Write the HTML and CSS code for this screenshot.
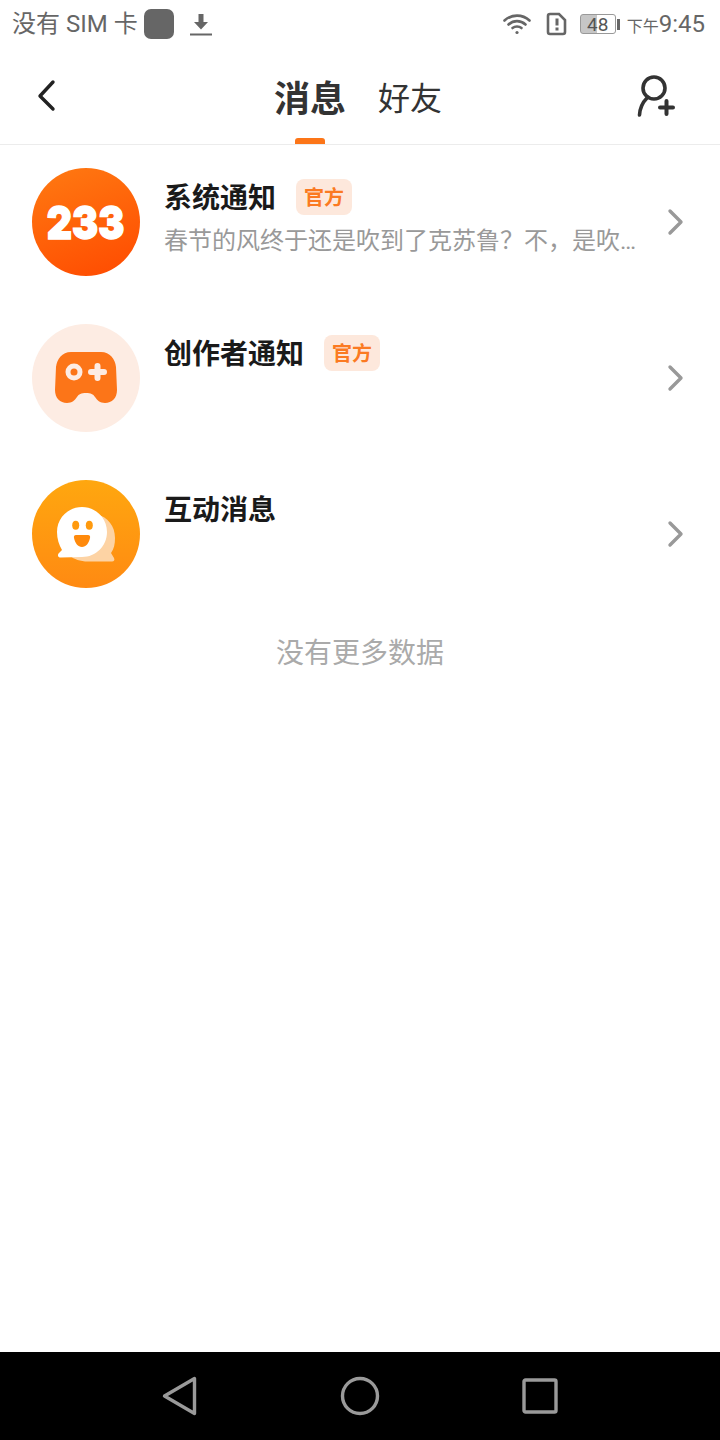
FILE: index.html
```html
<!DOCTYPE html>
<html lang="zh">
<head>
<meta charset="utf-8">
<title>消息</title>
<link rel="stylesheet" href="styles.css">
</head>
<body>
<div class="app">
  <div class="status">
    <div class="status-left">
      <span class="carrier">没有 SIM 卡</span>
      <span class="square"></span>
      <svg class="dl" width="24" height="26" viewBox="0 0 24 26"><path d="M9.500 3h5v8h4.500l-7 7.500-7-7.500h4.500z" fill="#666"/><rect x="1" y="22.500" width="22" height="2" fill="#666"/></svg>
    </div>
    <div class="status-right">
      <svg class="wifi" width="28" height="22" viewBox="0 0 28 22" fill="none" stroke="#666" stroke-width="2.600" stroke-linecap="round"><path d="M1.500 7.500C8.500 1 19.500 1 26.500 7.500"/><path d="M5.500 11.500C10.500 7 17.500 7 22.500 11.500"/><path d="M9.500 15C12 13 16 13 18.500 15"/><circle cx="14" cy="19.500" r="1.600" fill="#666" stroke="none"/></svg>
      <svg class="sim" width="22" height="24" viewBox="0 0 22 24"><path d="M4 2h9l6 6v12a2 2 0 0 1-2 2H4a2 2 0 0 1-2-2V4a2 2 0 0 1 2-2z" fill="none" stroke="#666" stroke-width="2.600"/><rect x="9.500" y="6.500" width="3" height="7" fill="#666"/><rect x="9.500" y="15.500" width="3" height="3" fill="#666"/></svg>
      <div class="battery"><div class="battery-body"><span class="battery-num">48</span></div><span class="battery-tip"></span></div>
      <div class="clock"><span class="clock-ap">下午</span>9:45</div>
    </div>
  </div>

  <header class="header">
    <svg class="back" width="24" height="36" viewBox="0 0 24 36" fill="none" stroke="#222" stroke-width="3.400" stroke-linecap="round" stroke-linejoin="round"><path d="M17 4L4 18l13 13"/></svg>
    <nav class="tabs">
      <div class="tab tab-active">消息<span class="indicator"></span></div>
      <div class="tab">好友</div>
    </nav>
    <svg class="add" width="42" height="44" viewBox="0 0 42 44" fill="none" stroke="#333" stroke-width="3.600" stroke-linecap="round"><circle cx="19" cy="14" r="11"/><path d="M12 24C8 28 5 33 4.500 41"/><path d="M25 33.500h13M31.500 27v13" stroke-width="4"/></svg>
  </header>

  <main class="list">
    <div class="row">
      <div class="avatar avatar-233"><span class="logo-text">233</span></div>
      <div class="body">
        <div class="title-line"><span class="title">系统通知</span><span class="tag">官方</span></div>
        <div class="sub">春节的风终于还是吹到了克苏鲁？不，是吹到了克苏鲁的世界里面</div>
      </div>
      <svg class="chev" width="18" height="28" viewBox="0 0 18 28" fill="none" stroke="#999" stroke-width="3.400" stroke-linecap="round" stroke-linejoin="round"><path d="M4 3l11 11L4 25"/></svg>
    </div>
    <div class="row">
      <div class="avatar avatar-game">
        <svg width="62" height="52" viewBox="0 0 62 52"><path d="M16 0H46C55 0 60 7 61 15L62 38C62 46 57 51 50 51C45 51 42 48 40 45C38 42 36 41 31 41C26 41 24 42 22 45C20 48 17 51 12 51C5 51 0 46 0 38L1 15C2 7 7 0 16 0Z" fill="#fc7518"/><circle cx="19" cy="20" r="8.500" fill="#fdece3"/><circle cx="19" cy="20" r="3.500" fill="#fc7518"/><path d="M42.500 14v12M36 20h13" stroke="#fdece3" stroke-width="6" stroke-linecap="round" fill="none"/></svg>
      </div>
      <div class="body">
        <div class="title-line"><span class="title">创作者通知</span><span class="tag">官方</span></div>
      </div>
      <svg class="chev" width="18" height="28" viewBox="0 0 18 28" fill="none" stroke="#999" stroke-width="3.400" stroke-linecap="round" stroke-linejoin="round"><path d="M4 3l11 11L4 25"/></svg>
    </div>
    <div class="row">
      <div class="avatar avatar-chat">
        <svg width="60" height="56" viewBox="0 0 60 56"><path d="M40 8C52 11 59 20 59 32C59 38 58 43 55 47L58 52C59 54 58 55.500 56 55.500H32C24 55.500 18 53 14 50Z" fill="#fdd3a4"/><path d="M26 1C40 1 51 12 51 26S40 51 26 51L5 51.500C2 51.500 1 49 3 47L6 44C3 39 1 33 1 26C1 12 12 1 26 1Z" fill="#fff"/><ellipse cx="19.700" cy="19.300" rx="3.500" ry="4.500" fill="#ff9a0e"/><ellipse cx="33.300" cy="19.300" rx="3.500" ry="4.500" fill="#ff9a0e"/><path d="M20 29H32C33.500 29 34.500 30 34 32C33 37 30 41 26 41S19 37 18 32C17.500 30 18.500 29 20 29Z" fill="#ff8a0c"/></svg>
      </div>
      <div class="body">
        <div class="title-line"><span class="title">互动消息</span></div>
      </div>
      <svg class="chev" width="18" height="28" viewBox="0 0 18 28" fill="none" stroke="#999" stroke-width="3.400" stroke-linecap="round" stroke-linejoin="round"><path d="M4 3l11 11L4 25"/></svg>
    </div>
    <div class="end">没有更多数据</div>
  </main>

  <footer class="navbar">
    <svg width="36" height="40" viewBox="0 0 36 40" fill="none" stroke="#9a9a9a" stroke-width="3.400" stroke-linejoin="round"><path d="M32.500 2.500v35L2.500 20z"/></svg>
    <svg width="40" height="40" viewBox="0 0 40 40" fill="none" stroke="#9a9a9a" stroke-width="3.400"><circle cx="20" cy="20" r="17.500"/></svg>
    <svg width="36" height="36" viewBox="0 0 36 36" fill="none" stroke="#9a9a9a" stroke-width="3.400" stroke-linejoin="round"><rect x="2" y="2" width="32" height="32" rx="1.500"/></svg>
  </footer>
</div>
</body>
</html>
```

FILE: styles.css
```css
* { box-sizing: border-box; }
html, body { margin: 0; padding: 0; background: #fff; }
body { font-family: "Noto Sans CJK SC", "Noto Sans", sans-serif; }
.app { width: 720px; height: 1440px; display: flex; flex-direction: column; overflow: hidden; }

.status { height: 50px; flex: none; display: flex; justify-content: space-between; align-items: center; padding: 0 15px 2px 12px; color: #666; }
.status-left, .status-right { display: flex; align-items: center; }
.carrier { font-family: Roboto, "Noto Sans CJK SC", sans-serif; font-size: 24px; line-height: 30px; width: 132px; white-space: nowrap; }
.square { width: 30px; height: 30px; border-radius: 7px; background: #666; }
.dl { margin-left: 15px; }
.wifi { margin-right: 15px; }
.sim { margin-right: 12px; }
.battery { display: flex; align-items: center; margin-right: 7px; }
.battery-body { width: 36px; height: 20px; border: 1.500px solid #999; border-radius: 3px; display: flex; align-items: center; justify-content: center; background: linear-gradient(90deg, #c6c6c6 0 46%, #fff 46%); }
.battery-num { font-family: Roboto, sans-serif; font-size: 19px; line-height: 17px; color: #555; }
.battery-tip { width: 3px; height: 11px; background: #666; margin-left: 1px; }
.clock { font-family: Roboto, sans-serif; font-size: 24px; line-height: 30px; white-space: nowrap; }
.clock-ap { font-family: "Noto Sans CJK SC", sans-serif; font-size: 16px; }

.header { height: 95px; flex: none; display: flex; align-items: center; justify-content: space-between; padding: 0 43px 0 36px; border-bottom: 1px solid #ececec; }
.back { margin-top: -3px; }
.tabs { display: flex; gap: 32px; align-items: center; height: 94px; margin-left: 21px; }
.tab { font-size: 32px; line-height: 94px; color: #333; position: relative; margin-top: -3px; }
.tab-active { font-size: 36px; font-weight: 700; }
.indicator { position: absolute; left: 21px; bottom: -1px; width: 30px; height: 6px; background: #fc7518; border-radius: 3px 3px 0 0; }
.add { margin-top: -2px; }

.list { flex: 1; }
.row { height: 156px; display: flex; align-items: flex-start; padding: 23px 36px 0 32px; }
.avatar { width: 108px; height: 108px; border-radius: 50%; flex: none; display: flex; align-items: center; justify-content: center; }
.avatar-233 { background: linear-gradient(160deg, #ff7a12, #ff4a00); }
.logo-text { font-family: Inter, sans-serif; font-weight: 900; font-size: 46px; line-height: 46px; color: #fff; -webkit-text-stroke: 1.500px #fff; transform: scaleX(0.85); }
.avatar-game { background: #fdece3; }
.avatar-chat { background: linear-gradient(180deg, #ffa70f, #ff8a12); }
.body { flex: 1; min-width: 0; margin-left: 24px; padding-top: 11px; padding-right: 26px; }
.title-line { display: flex; align-items: center; height: 36px; }
.title { font-size: 28px; font-weight: 700; line-height: 36px; color: #1a1a1a; margin-top: -2px; }
.tag { width: 56px; height: 36px; margin-left: 20px; border-radius: 8px; background: #fde8dc; color: #fb7a22; font-size: 20px; font-weight: 700; line-height: 36px; text-align: center; }
.sub { font-family: Roboto, "Noto Sans CJK SC", sans-serif; font-size: 24px; line-height: 36px; margin-top: 8px; color: #999; white-space: nowrap; overflow: hidden; text-overflow: ellipsis; }
.chev { flex: none; margin-top: 40px; }
.end { text-align: center; font-size: 28px; line-height: 40px; color: #aaa; margin-top: 18px; }

.navbar { height: 88px; flex: none; background: #000; display: flex; align-items: center; justify-content: center; gap: 142px; }
```
